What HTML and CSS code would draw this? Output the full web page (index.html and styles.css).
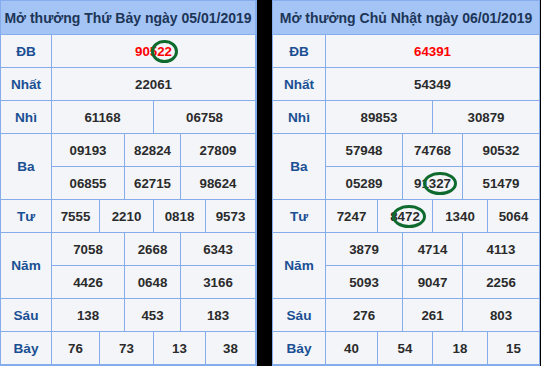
FILE: index.html
```html
<!DOCTYPE html>
<html lang="vi">
<head>
    <meta charset="UTF-8">
    <meta name="viewport" content="width=device-width, initial-scale=1.0">
    <title>Kết quả xổ số</title>
    <link rel="stylesheet" href="styles.css">
</head>
<body>

<div class="page">
    <div class="board board-left">
        <div class="cell head">Mở thưởng Thứ Bảy ngày 05/01/2019</div>

        <div class="cell label">ĐB</div>
        <div class="cell w6 red">905<span class="mark">22</span></div>

        <div class="cell label">Nhất</div>
        <div class="cell w6">22061</div>

        <div class="cell label">Nhì</div>
        <div class="cell w3">61168</div>
        <div class="cell w3">06758</div>

        <div class="cell label tall">Ba</div>
        <div class="cell w2">09193</div>
        <div class="cell w2">82824</div>
        <div class="cell w2">27809</div>
        <div class="cell w2">06855</div>
        <div class="cell w2">62715</div>
        <div class="cell w2">98624</div>

        <div class="cell label">Tư</div>
        <div class="cell">7555</div>
        <div class="cell w2">2210</div>
        <div class="cell w2">0818</div>
        <div class="cell">9573</div>

        <div class="cell label tall">Năm</div>
        <div class="cell w2">7058</div>
        <div class="cell w2">2668</div>
        <div class="cell w2">6343</div>
        <div class="cell w2">4426</div>
        <div class="cell w2">0648</div>
        <div class="cell w2">3166</div>

        <div class="cell label">Sáu</div>
        <div class="cell w2">138</div>
        <div class="cell w2">453</div>
        <div class="cell w2">183</div>

        <div class="cell label">Bảy</div>
        <div class="cell">76</div>
        <div class="cell w2">73</div>
        <div class="cell w2">13</div>
        <div class="cell">38</div>
    </div>

    <div class="board board-right">
        <div class="cell head">Mở thưởng Chủ Nhật ngày 06/01/2019</div>

        <div class="cell label">ĐB</div>
        <div class="cell w6 red">64391</div>

        <div class="cell label">Nhất</div>
        <div class="cell w6">54349</div>

        <div class="cell label">Nhì</div>
        <div class="cell w3">89853</div>
        <div class="cell w3">30879</div>

        <div class="cell label tall">Ba</div>
        <div class="cell w2">57948</div>
        <div class="cell w2">74768</div>
        <div class="cell w2">90532</div>
        <div class="cell w2">05289</div>
        <div class="cell w2">91<span class="mark">327</span></div>
        <div class="cell w2">51479</div>

        <div class="cell label">Tư</div>
        <div class="cell">7247</div>
        <div class="cell w2">8<span class="mark">472</span></div>
        <div class="cell w2">1340</div>
        <div class="cell">5064</div>

        <div class="cell label tall">Năm</div>
        <div class="cell w2">3879</div>
        <div class="cell w2">4714</div>
        <div class="cell w2">4113</div>
        <div class="cell w2">5093</div>
        <div class="cell w2">9047</div>
        <div class="cell w2">2256</div>

        <div class="cell label">Sáu</div>
        <div class="cell w2">276</div>
        <div class="cell w2">261</div>
        <div class="cell w2">803</div>

        <div class="cell label">Bảy</div>
        <div class="cell">40</div>
        <div class="cell w2">54</div>
        <div class="cell w2">18</div>
        <div class="cell">15</div>
    </div>
</div>

</body>
</html>
```

FILE: styles.css
```css
body {
    margin: 0;
    background: #000;
    font-family: "Liberation Sans", Arial, sans-serif;
}

.page {
    display: flex;
    gap: 15px;
    align-items: flex-start;
}

.board {
    display: grid;
    grid-template-rows: 33px repeat(10, 32px);
    gap: 1px;
    padding: 1px 2px 2px 1px;
    background: #86acec;
}

.board-left {
    grid-template-columns: 50px 47px 24px 28px 26px 24px 49px;
}

.board-right {
    grid-template-columns: 52px 51px 24px 29px 29px 24px 51px;
    padding-right: 1px;
}

.cell {
    display: flex;
    align-items: center;
    justify-content: center;
    background: #f3f5f9;
    color: #2b2b2b;
    font-size: 13.3px;
    font-weight: bold;
    white-space: nowrap;
}

.head {
    grid-column: 1 / -1;
    background: #a3c4f5;
    color: #1d3557;
    font-size: 14px;
}

.label {
    color: #1a4f93;
    font-size: 13.6px;
}

.tall {
    grid-row: span 2;
}

.w2 {
    grid-column: span 2;
}

.w3 {
    grid-column: span 3;
}

.w6 {
    grid-column: span 6;
}

.red {
    color: #f00;
}

.mark {
    position: relative;
}

.mark::after {
    content: "";
    position: absolute;
    left: -6px;
    right: -6px;
    top: -4px;
    bottom: -4px;
    border: 3px solid #0f6a2e;
    border-radius: 50%;
}
```
